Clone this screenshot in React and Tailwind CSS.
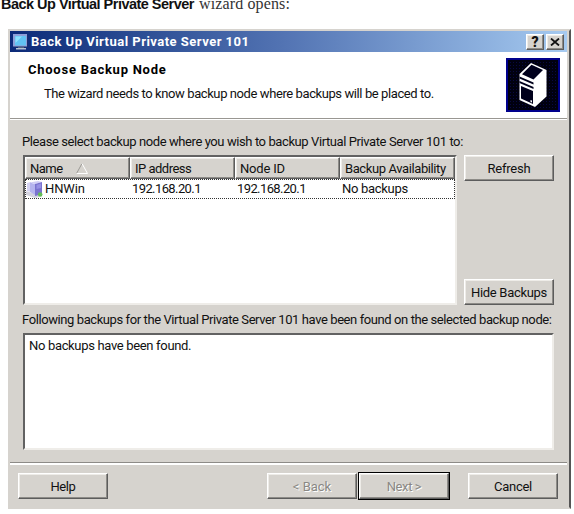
import React from 'react';
import clsx from 'clsx';

const raised =
  'border border-t-white border-l-white border-r-[#5c5c5c] border-b-[#5c5c5c] shadow-[inset_-1px_-1px_0_#8d8b87,inset_1px_1px_0_#eeece8]';

const sunken =
  'border-2 border-t-[#626262] border-l-[#626262] border-r-[#efede9] border-b-[#efede9] bg-white';

function Button({ children, className }) {
  return (
    <button
      type="button"
      className={clsx('flex h-[26px] w-[90px] items-center justify-center bg-[#d6d3ce] pt-px whitespace-nowrap', raised, className)}
    >
      {children}
    </button>
  );
}

function MonitorIcon() {
  return (
    <svg viewBox="0 0 16 16" className="h-4 w-4 shrink-0">
      <path d="M1 1H14.5V13H1z" fill="#26325e" />
      <path d="M0 0H14V12.5H0z" fill="#8f9fd8" />
      <path d="M2 2H13V11.5H2z" fill="#62c3f2" />
      <path d="M2.5 2.5H9L2.5 9z" fill="#8ee0fb" />
      <path d="M5 13H11V14H5z" fill="#536582" />
      <path d="M3 14H13V15.5H3z" fill="#b7c3d4" />
    </svg>
  );
}

function ServerIcon() {
  return (
    <svg viewBox="0 0 54 54" className="h-[54px] w-[54px]">
      <defs>
        <pattern id="dots" width="3" height="3" patternUnits="userSpaceOnUse">
          <path d="M0 0H3V3H0z" fill="#00000f" />
          <path d="M1 1H2V2H1z" fill="#080842" />
        </pattern>
      </defs>
      <path d="M0 0H54V54H0z" fill="#00008c" />
      <path d="M2 2H52V52H2z" fill="url(#dots)" />
      <path d="M25 5L40.5 12V38.5L29 49L13.5 42V16z" fill="#fff" />
      <path d="M25.5 6.8L37 12L27.5 21.5L16 16.2z" fill="#00001c" />
      <path d="M13.5 18.5L27.5 24.5V26.5L13.5 20.5z" fill="#00001c" />
      <path d="M13.5 23L27.5 29V31L13.5 25z" fill="#00001c" />
      <path d="M15 28L27 33V46L15 40.5z" fill="#00001c" />
      <path d="M24.5 42L26 42.5V44.5L24.5 44z" fill="#fff" />
    </svg>
  );
}

function NodeIcon() {
  return (
    <svg viewBox="0 0 18 18" className="h-[18px] w-[18px] shrink-0">
      <path d="M0 11L9 14L14 17L9 18L0 15z" fill="#d3d3df" />
      <path d="M1 3L5 2V12L1 11z" fill="#d4d2f3" />
      <path d="M4 2.5L9 4V15L4 12z" fill="#b5b4ee" />
      <path d="M4 2.5L12 1L16 2L9 4z" fill="#d0cef6" />
      <path d="M9 4L16 2V14.5L9 16z" fill="#7a73cf" />
      <path d="M10.5 5L15 3.5V8L10.5 9z" fill="#9791e4" />
      <circle cx="14.2" cy="14.5" r="2.3" fill="#62bd55" />
    </svg>
  );
}

const columns = [
  { label: 'Name', width: 'w-[105px]', tracking: 'tracking-[-0.5px]', sorted: true },
  { label: 'IP address', width: 'w-[105px]', tracking: 'tracking-[-0.5px]' },
  { label: 'Node ID', width: 'w-[105px]', tracking: 'tracking-[-0.2px]' },
  { label: 'Backup Availability', width: 'w-[115px]', tracking: 'tracking-[-0.4px]' },
];

export default function App() {
  return (
    <div className="h-[514px] w-[574px] overflow-hidden bg-white font-['Roboto',sans-serif] text-[13px] leading-4 text-[#111]">
      <p className="flex h-[29px] items-start whitespace-pre">
        <span className="-mt-[4px] ml-px w-[198px] font-['Liberation_Sans',sans-serif] text-[14.5px] font-bold tracking-[-0.52px]">
          Back Up Virtual Private Server
        </span>
        <span className="-mt-[4px] font-['Liberation_Serif',serif] text-[16px] tracking-[0.13px] text-[#333]">wizard opens:</span>
      </p>

      <div className="ml-2 h-[480px] w-[563px] border-2 border-t-[#d6d3ce] border-r-[#555555] border-b-[#d6d3ce] border-l-[#d6d3ce] bg-[#d6d3ce]">
        <div className="flex h-[21px] w-[557px] items-center bg-linear-to-r from-[#0c2a78] via-[#5475b4] to-[#a6caf0] pr-[3px] pl-[3px]">
          <MonitorIcon />
          <span className="ml-0.5 flex-1 pt-px font-bold tracking-[0.48px] whitespace-nowrap text-white">Back Up Virtual Private Server 101</span>
          <div className="flex gap-0.5">
            <span className={clsx('flex h-4 w-[18px] items-center justify-center bg-[#d6d3ce] text-[14px] font-black', raised)}>?</span>
            <span className={clsx('flex h-4 w-[18px] items-center justify-center bg-[#d6d3ce]', raised)}>
              <svg viewBox="0 0 10 8" className="h-2 w-2.5">
                <path d="M1 0.5L9 7.5M9 0.5L1 7.5" stroke="#111" strokeWidth="1.8" />
              </svg>
            </span>
          </div>
        </div>

        <div className="flex h-[67px] w-[557px] justify-between border-b border-[#999792] bg-white pt-[6px] pr-[7px] pl-[18px]">
          <div className="whitespace-nowrap">
            <h1 className="mt-[4px] font-bold tracking-[0.75px] text-black">Choose Backup Node</h1>
            <p className="mt-[8px] ml-4 tracking-[-0.41px]">The wizard needs to know backup node where backups will be placed to.</p>
          </div>
          <ServerIcon />
        </div>

        <div className="h-[344px] w-[557px] border-t border-b border-t-white border-b-[#8d8b87] pt-[14px] pl-[13px] whitespace-nowrap">
          <p className="-ml-px tracking-[-0.41px]">Please select backup node where you wish to backup Virtual Private Server 101 to:</p>
          <div className="mt-[5px] flex h-[150px] justify-between pr-[13px]">
            <div className={clsx('h-[150px] w-[434px]', sunken)}>
              <div className="flex h-[22px]">
                {columns.map((c) => (
                  <div key={c.label} className={clsx('flex items-center bg-[#d6d3ce] pt-px pl-1', raised, c.width, c.tracking)}>
                    {c.label}
                    {c.sorted && (
                      <svg viewBox="0 0 12 11" className="ml-[13px] h-[11px] w-3">
                        <path d="M6 0.5L0.5 10.5" stroke="#9c9a96" />
                        <path d="M6 0.5L11.5 10.5H0.5" fill="none" stroke="#fff" />
                      </svg>
                    )}
                  </div>
                ))}
              </div>
              <div className="flex h-[20px] items-center border border-dotted border-[#333]">
                <NodeIcon />
                <span className="ml-px w-[87px] tracking-[-0.1px]">HNWin</span>
                <span className="w-[105px] tracking-[-0.6px]">192.168.20.1</span>
                <span className="w-[105px] tracking-[-0.6px]">192.168.20.1</span>
                <span className="tracking-[-0.3px]">No backups</span>
              </div>
            </div>
            <div className="flex flex-col justify-between">
              <Button className="tracking-[-0.2px]">Refresh</Button>
              <Button className="tracking-[-0.3px]">Hide Backups</Button>
            </div>
          </div>
          <p className="mt-[7px] -ml-px tracking-[-0.41px]">
            Following backups for the Virtual Private Server 101 have been found on the selected backup node:
          </p>
          <div className={clsx('mt-[5px] h-[117px] w-[531px] pl-1', sunken)}>
            <p className="mt-[3px] tracking-[-0.33px]">No backups have been found.</p>
          </div>
        </div>

        <div className="flex w-[557px] items-center border-t-2 border-white pt-[7px] pr-[9px] pl-2">
          <Button className="tracking-[-0.4px]">Help</Button>
          <Button className="mr-px ml-[159px] text-[#8a8884] text-shadow-[1px_1px_0_#fff]">&lt; Back</Button>
          <div className="border border-black">
            <Button className="tracking-[-0.4px] text-[#8a8884] text-shadow-[1px_1px_0_#fff]">Next &gt;</Button>
          </div>
          <Button className="ml-auto tracking-[-0.3px]">Cancel</Button>
        </div>
      </div>
    </div>
  );
}
